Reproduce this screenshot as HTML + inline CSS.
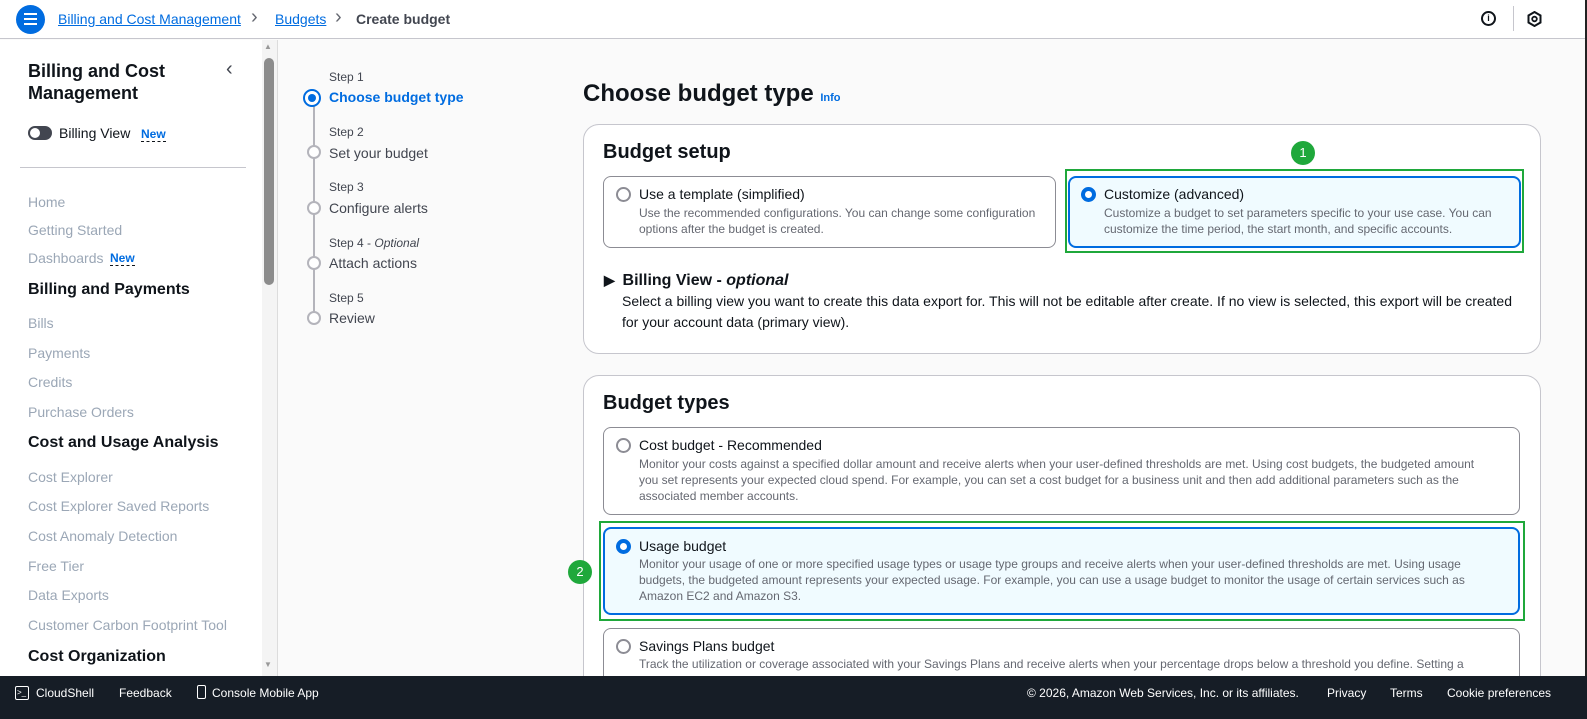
<!DOCTYPE html>
<html><head><meta charset="utf-8"><style>
*{box-sizing:border-box;margin:0;padding:0}
body{width:1587px;height:719px;overflow:hidden;font-family:"Liberation Sans",sans-serif;background:#fafafa;position:relative;color:#0f141a}
.a{position:absolute;white-space:nowrap}
.top{left:0;top:0;width:1587px;height:39px;background:#fff;border-bottom:1px solid #c6c6cd}
.side{left:0;top:40px;width:262px;height:636px;background:#fff}
.nav{left:28px;font-size:14px;color:#9ba7b6}
.navh{left:28px;font-size:16px;font-weight:bold;color:#0f141a}
.new{color:#006ce0;font-size:12px;font-weight:bold;border-bottom:1px dashed #0f141a}
.step{left:329px;font-size:12px;color:#424650}
.sl{left:329px;font-size:14px;color:#424650}
.circ{width:14px;height:14px;border:2px solid #b4b4bb;border-radius:50%;background:#fff}
.box{background:#fff;border:1px solid #c6c6cd;border-radius:16px}
.tile{border:1px solid #8c8c94;border-radius:8px;background:#fff}
.sel{border:2px solid #006ce0;background:#f0fbff}
.green{border:2px solid #1fa83b}
.t1{font-size:14px;color:#0f141a}
.t2{font-size:12px;color:#656871;line-height:16px;white-space:normal}
.rad{width:15px;height:15px;border-radius:50%;border:2px solid #8c8c94;background:#fff}
.rads{width:15px;height:15px;border-radius:50%;border:4px solid #006ce0;background:#fff}
.gb{width:24px;height:24px;border-radius:50%;background:#1fa83b;color:#fff;font-size:13px;text-align:center;line-height:24px}
.foot{left:0;top:676px;width:1587px;height:43px;background:#161d26;color:#fff;font-size:12px}
</style></head><body>
<div class="a top"></div>
<div class="a" style="left:16px;top:5px;width:29px;height:29px;border-radius:50%;background:#006ce0"></div>
<div class="a" style="left:24px;top:13px;width:13px;height:2px;background:#fff;box-shadow:0 5px 0 #fff,0 10px 0 #fff"></div>
<div class="a" style="left:58px;top:11px;font-size:14px;color:#006ce0;text-decoration:underline">Billing and Cost Management</div>
<div class="a" style="left:251px;top:6px;font-size:20px;color:#656871">&#x203A;</div>
<div class="a" style="left:275px;top:11px;font-size:14px;color:#006ce0;text-decoration:underline">Budgets</div>
<div class="a" style="left:335px;top:6px;font-size:20px;color:#656871">&#x203A;</div>
<div class="a" style="left:356px;top:11px;font-size:14px;color:#424650;font-weight:bold">Create budget</div>
<div class="a" style="left:1481px;top:11px;width:15px;height:15px;border:2px solid #0f141a;border-radius:50%;font-size:9px;font-weight:bold;text-align:center;line-height:11px">i</div>
<div class="a" style="left:1513px;top:6px;width:1px;height:25px;background:#c6c6cd"></div>
<svg class="a" style="left:1527px;top:11px" width="15" height="16" viewBox="0 0 15 16"><path d="M7.5 1L13.5 4.5V11.5L7.5 15L1.5 11.5V4.5Z" fill="none" stroke="#0f141a" stroke-width="2"/><circle cx="7.5" cy="8" r="2.3" fill="none" stroke="#0f141a" stroke-width="1.8"/></svg>
<div class="a" style="left:1585px;top:0;width:2px;height:676px;background:#222"></div>

<div class="a side"></div>
<div class="a" style="left:262px;top:40px;width:16px;height:636px;background:#f4f4f4;border-right:1px solid #dcdcdc"></div>
<div class="a" style="left:264px;top:58px;width:10px;height:227px;background:#8c8c8c;border-radius:5px"></div>
<div class="a" style="left:264px;top:42px;font-size:8px;color:#999">&#9650;</div>
<div class="a" style="left:264px;top:660px;font-size:8px;color:#999">&#9660;</div>
<div class="a" style="left:28px;top:60px;font-size:18px;font-weight:bold;line-height:22px">Billing and Cost<br>Management</div>
<div class="a" style="left:226px;top:58px;font-size:20px;color:#424650">&#x2039;</div>
<div class="a" style="left:28px;top:126px;width:24px;height:14px;border-radius:7px;background:#424650"></div>
<div class="a" style="left:30px;top:128px;width:10px;height:10px;border-radius:50%;background:#fff"></div>
<div class="a" style="left:59px;top:125px;font-size:14px">Billing View</div>
<div class="a new" style="left:141px;top:127px">New</div>
<div class="a" style="left:20px;top:167px;width:226px;height:1px;background:#c6c6cd"></div>
<div class="a nav" style="top:194px">Home</div>
<div class="a nav" style="top:222px">Getting Started</div>
<div class="a nav" style="top:250px">Dashboards</div>
<div class="a new" style="left:110px;top:251px">New</div>
<div class="a navh" style="top:281px">Billing and Payments</div>
<div class="a nav" style="top:315px">Bills</div>
<div class="a nav" style="top:345px">Payments</div>
<div class="a nav" style="top:374px">Credits</div>
<div class="a nav" style="top:404px">Purchase Orders</div>
<div class="a navh" style="top:434px">Cost and Usage Analysis</div>
<div class="a nav" style="top:469px">Cost Explorer</div>
<div class="a nav" style="top:498px">Cost Explorer Saved Reports</div>
<div class="a nav" style="top:528px">Cost Anomaly Detection</div>
<div class="a nav" style="top:558px">Free Tier</div>
<div class="a nav" style="top:587px">Data Exports</div>
<div class="a nav" style="top:617px">Customer Carbon Footprint Tool</div>
<div class="a navh" style="top:648px">Cost Organization</div>

<div class="a" style="left:313px;top:106px;width:2px;height:207px;background:#b4b4bb"></div>
<div class="a step" style="top:70px">Step 1</div>
<div class="a" style="left:303px;top:89px;width:18px;height:18px;border:2px solid #006ce0;border-radius:50%;background:#fff"></div>
<div class="a" style="left:308px;top:94px;width:8px;height:8px;border-radius:50%;background:#006ce0"></div>
<div class="a" style="left:329px;top:89px;font-size:14px;font-weight:bold;color:#006ce0">Choose budget type</div>
<div class="a step" style="top:125px">Step 2</div>
<div class="a circ" style="left:307px;top:145px"></div>
<div class="a sl" style="top:145px">Set your budget</div>
<div class="a step" style="top:180px">Step 3</div>
<div class="a circ" style="left:307px;top:201px"></div>
<div class="a sl" style="top:200px">Configure alerts</div>
<div class="a step" style="top:236px">Step 4 - <i>Optional</i></div>
<div class="a circ" style="left:307px;top:256px"></div>
<div class="a sl" style="top:255px">Attach actions</div>
<div class="a step" style="top:291px">Step 5</div>
<div class="a circ" style="left:307px;top:311px"></div>
<div class="a sl" style="top:310px">Review</div>

<div class="a" style="left:583px;top:80px;font-size:24px;font-weight:bold">Choose budget type <span style="font-size:11px;color:#006ce0">Info</span></div>

<div class="a box" style="left:583px;top:124px;width:958px;height:230px"></div>
<div class="a" style="left:603px;top:141px;font-size:20px;font-weight:bold">Budget setup</div>
<div class="a gb" style="left:1291px;top:141px">1</div>
<div class="a tile" style="left:603px;top:176px;width:453px;height:72px"></div>
<div class="a rad" style="left:616px;top:187px"></div>
<div class="a t1" style="left:639px;top:186px">Use a template (simplified)</div>
<div class="a t2" style="left:639px;top:205px;width:410px">Use the recommended configurations. You can change some configuration options after the budget is created.</div>
<div class="a green" style="left:1065px;top:169px;width:459px;height:84px"></div>
<div class="a tile sel" style="left:1068px;top:176px;width:453px;height:72px;border-radius:8px"></div>
<div class="a rads" style="left:1081px;top:187px"></div>
<div class="a t1" style="left:1104px;top:186px">Customize (advanced)</div>
<div class="a t2" style="left:1104px;top:205px;width:410px">Customize a budget to set parameters specific to your use case. You can customize the time period, the start month, and specific accounts.</div>
<div class="a" style="left:604px;top:272px;font-size:14px;font-weight:bold">&#9654;&nbsp; <span style="font-size:16px">Billing View - <i>optional</i></span></div>
<div class="a" style="left:622px;top:291px;width:900px;font-size:14px;line-height:21px;white-space:normal;color:#0f141a">Select a billing view you want to create this data export for. This will not be editable after create. If no view is selected, this export will be created for your account data (primary view).</div>

<div class="a box" style="left:583px;top:375px;width:958px;height:340px"></div>
<div class="a" style="left:603px;top:392px;font-size:20px;font-weight:bold">Budget types</div>
<div class="a tile" style="left:603px;top:427px;width:917px;height:88px"></div>
<div class="a rad" style="left:616px;top:438px"></div>
<div class="a t1" style="left:639px;top:437px">Cost budget - Recommended</div>
<div class="a t2" style="left:639px;top:456px;width:840px">Monitor your costs against a specified dollar amount and receive alerts when your user-defined thresholds are met. Using cost budgets, the budgeted amount you set represents your expected cloud spend. For example, you can set a cost budget for a business unit and then add additional parameters such as the associated member accounts.</div>
<div class="a green" style="left:599px;top:521px;width:926px;height:100px"></div>
<div class="a tile sel" style="left:603px;top:527px;width:917px;height:88px"></div>
<div class="a rads" style="left:616px;top:539px"></div>
<div class="a t1" style="left:639px;top:538px">Usage budget</div>
<div class="a t2" style="left:639px;top:556px;width:870px">Monitor your usage of one or more specified usage types or usage type groups and receive alerts when your user-defined thresholds are met. Using usage budgets, the budgeted amount represents your expected usage. For example, you can use a usage budget to monitor the usage of certain services such as Amazon EC2 and Amazon S3.</div>
<div class="a gb" style="left:568px;top:560px">2</div>
<div class="a tile" style="left:603px;top:628px;width:917px;height:88px"></div>
<div class="a rad" style="left:616px;top:639px"></div>
<div class="a t1" style="left:639px;top:638px">Savings Plans budget</div>
<div class="a t2" style="left:639px;top:656px;width:870px">Track the utilization or coverage associated with your Savings Plans and receive alerts when your percentage drops below a threshold you define. Setting a</div>

<div class="a foot"></div>
<div class="a" style="left:15px;top:686px;width:14px;height:14px;border:1.5px solid #fff;border-radius:2px;font-size:8px;color:#fff;line-height:11px;padding-left:1px">&gt;_</div>
<div class="a" style="left:36px;top:686px;font-size:12px;color:#fff">CloudShell</div>
<div class="a" style="left:119px;top:686px;font-size:12px;color:#fff">Feedback</div>
<div class="a" style="left:197px;top:685px;width:9px;height:14px;border:1.5px solid #fff;border-radius:2px"></div>
<div class="a" style="left:212px;top:686px;font-size:12px;color:#fff">Console Mobile App</div>
<div class="a" style="left:1027px;top:686px;font-size:12px;color:#fff">© 2026, Amazon Web Services, Inc. or its affiliates.</div>
<div class="a" style="left:1327px;top:686px;font-size:12px;color:#fff">Privacy</div>
<div class="a" style="left:1390px;top:686px;font-size:12px;color:#fff">Terms</div>
<div class="a" style="left:1447px;top:686px;font-size:12px;color:#fff">Cookie preferences</div>
</body></html>
